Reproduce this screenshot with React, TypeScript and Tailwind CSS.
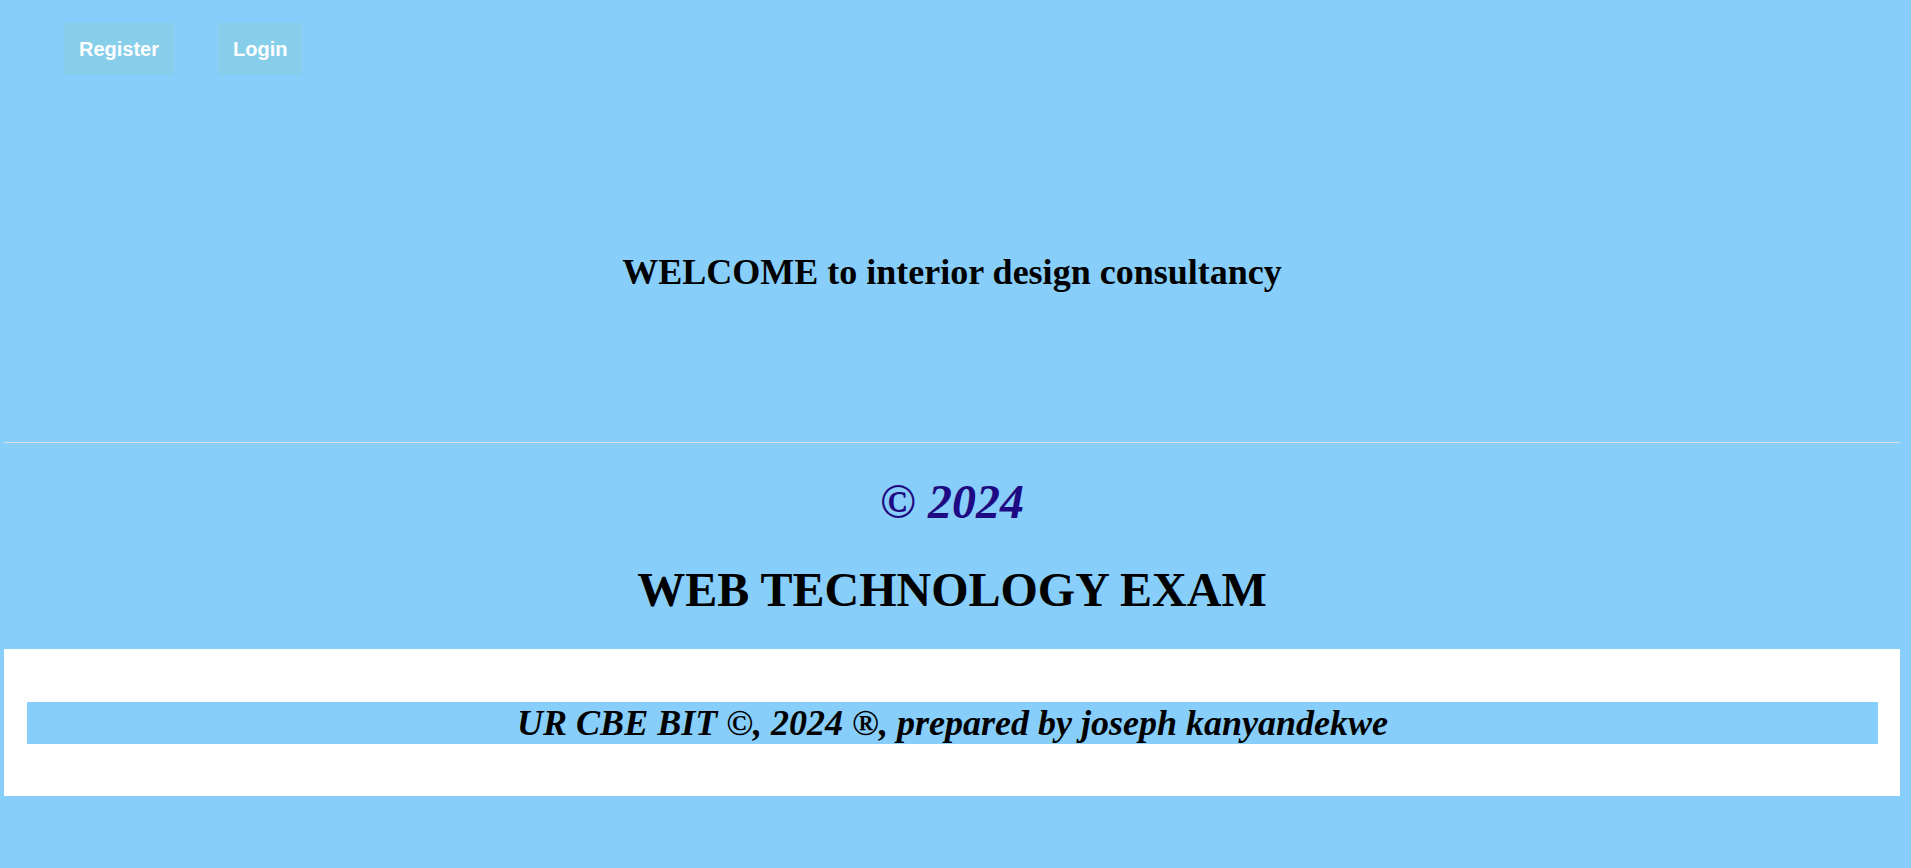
export default function App() {
  const serif = { fontFamily: '"Liberation Serif", "Times New Roman", serif' };
  return (
    <div className="min-h-screen w-full bg-[#87cefa]">
      <nav className="flex gap-[44px] pl-[64px] pt-[23px]" style={{ fontFamily: '"Liberation Sans", Arial, sans-serif' }}>
        <a className="flex h-[52px] items-center bg-[#87ceeb] px-[15px] text-[20px] font-bold text-white">Register</a>
        <a className="flex h-[52px] items-center bg-[#87ceeb] px-[15px] text-[20px] font-bold text-white">Login</a>
      </nav>
      <div className="ml-[4px] mr-[11px]" style={serif}>
        <h1 className="mt-[176px] text-center text-[36px] font-bold leading-[42px] text-black">
          WELCOME to interior design consultancy
        </h1>
        <div className="mt-[149px] h-px bg-[#dddddd]" />
        <p className="mt-[31px] text-center text-[48px] font-bold italic leading-[56px] text-[#1e0a82]">© 2024</p>
        <h2 className="mt-[32px] text-center text-[48px] font-bold leading-[56px] text-black">WEB TECHNOLOGY EXAM</h2>
        <footer className="mt-[31px] bg-white pb-[52px] pl-[23px] pr-[22px] pt-[53px]">
          <p className="bg-[#87cefa] text-center text-[36px] font-bold italic leading-[42px] text-black">
            UR CBE BIT ©, 2024 ®, prepared by joseph kanyandekwe
          </p>
        </footer>
      </div>
    </div>
  );
}
